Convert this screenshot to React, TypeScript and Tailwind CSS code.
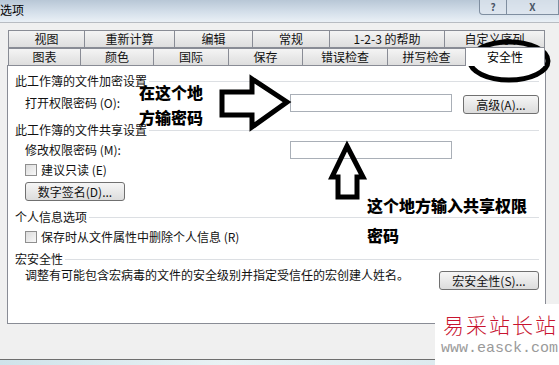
import React from "react";

const ui = { fontFamily: '"Noto Sans CJK SC", "Liberation Sans", sans-serif' };

const row1 = [
  { label: "视图", w: 77 },
  { label: "重新计算", w: 91 },
  { label: "编辑", w: 79 },
  { label: "常规", w: 78 },
  { label: "1-2-3 的帮助", w: 116 },
  { label: "自定义序列", w: 101 },
];

const row2 = [
  { label: "图表", w: 73 },
  { label: "颜色", w: 74 },
  { label: "国际", w: 76 },
  { label: "保存", w: 75 },
  { label: "错误检查", w: 86 },
  { label: "拼写检查", w: 79 },
  { label: "安全性", w: 80, active: true },
];

function Tab({ label, w, active }: { label: string; w: number; active?: boolean }) {
  return (
    <div
      style={{ width: w }}
      className={
        active
          ? "relative z-10 -ml-px flex h-[19px] items-center justify-center border border-b-0 border-[#898c95] bg-white text-[12px] text-black"
          : "-ml-px flex h-[18px] items-center justify-center border border-[#898c95] bg-gradient-to-b from-[#f4f4f4] to-[#dedede] text-[12px] text-[#111]"
      }
    >
      {label}
    </div>
  );
}

function GroupHeader({ children, className = "" }: { children: React.ReactNode; className?: string }) {
  return (
    <div className={"flex h-[16px] items-center gap-[2px] " + className}>
      <span className="text-[12px] leading-[16px] text-[#111]">{children}</span>
      <div className="h-px flex-1 bg-[#dcdfe3]" />
    </div>
  );
}

function Btn({ children, className = "" }: { children: React.ReactNode; className?: string }) {
  return (
    <div
      className={
        "flex h-[19px] items-center justify-center rounded-[3px] border border-[#707070] bg-gradient-to-b from-[#f6f6f6] to-[#dcdcdc] text-[12px] text-[#111] " +
        className
      }
    >
      {children}
    </div>
  );
}

function Check({ children, className = "" }: { children: React.ReactNode; className?: string }) {
  return (
    <div className={"flex h-[14px] items-center gap-[4px] pl-[10px] " + className}>
      <div className="h-[12px] w-[12px] border border-[#8f8f8f] bg-gradient-to-br from-[#dcdcdc] to-[#f8f8f8]" />
      <span className="text-[12px] leading-[14px] text-[#111]">{children}</span>
    </div>
  );
}

export default function App() {
  return (
    <div style={ui} className="relative h-[365px] w-[559px] overflow-hidden bg-[#f0f0f0]">
      {/* title bar */}
      <div className="flex h-[22px] items-start bg-[linear-gradient(to_bottom,#b8c7d6,#d4dfea_55%,#eaf0f6)]">
        <span className="pt-[3px] text-[12px] leading-[14px] text-black">选项</span>
        <div className="ml-auto flex h-[15px] rounded-bl-[4px] border border-t-0 border-[#7f8ea0] bg-[#dfe7ef]/70">
          <div className="flex w-[27px] items-center justify-center border-r border-[#7f8ea0] text-[10px] font-bold leading-[12px] text-[#4a5566]">
            ?
          </div>
          <div className="flex w-[51px] items-center justify-center text-[10px] font-bold leading-[12px] text-[#4a5566]">
            X
          </div>
        </div>
      </div>

      {/* dialog body */}
      <div className="flex h-[337px] flex-col border-t border-[#b8bcc2] pl-[7px]">
        <div className="flex flex-col pt-[7px]">
          <div className="ml-[2px] flex">
            {row1.map((t) => (
              <Tab key={t.label} label={t.label} w={t.w} />
            ))}
          </div>
          <div className="-mt-px ml-[2px] flex items-end">
            {row2.map((t) => (
              <Tab key={t.label} label={t.label} w={t.w} active={t.active} />
            ))}
          </div>
        </div>

        {/* panel */}
        <div className="-mt-px flex h-[259px] w-[539px] flex-col border border-[#898c95] bg-white pl-[7px] pr-[6px] pt-[7px]">
          <GroupHeader>此工作簿的文件加密设置</GroupHeader>
          <div className="mt-[5px] flex h-[19px] items-start">
            <span className="w-[275px] pl-[10px] text-[12px] leading-[18px] text-[#111]">打开权限密码 (O):</span>
            <div className="h-[18px] w-[162px] border border-[#a9afb7] bg-white" />
            <Btn className="ml-auto mt-[1px] w-[76px]">高级(A)...</Btn>
          </div>

          <GroupHeader className="mt-[9px]">此工作簿的文件共享设置</GroupHeader>
          <div className="mt-[3px] flex h-[18px] items-start">
            <span className="w-[275px] pl-[10px] text-[12px] leading-[18px] text-[#111]">修改权限密码 (M):</span>
            <div className="h-[18px] w-[162px] border border-[#a9afb7] bg-white" />
          </div>
          <Check className="mt-[4px]">建议只读 (E)</Check>
          <div className="mt-[5px] pl-[10px]">
            <Btn className="w-[100px]">数字签名(D)...</Btn>
          </div>

          <GroupHeader className="mt-[8px]">个人信息选项</GroupHeader>
          <Check className="mt-[5px]">保存时从文件属性中删除个人信息 (R)</Check>

          <GroupHeader className="mt-[7px]">宏安全性</GroupHeader>
          <div className="mt-[1px] flex items-start">
            <span className="pl-[10px] text-[12px] leading-[14px] text-[#111]">
              调整有可能包含宏病毒的文件的安全级别并指定受信任的宏创建人姓名。
            </span>
            <Btn className="ml-auto mt-[3px] w-[100px]">宏安全性(S)...</Btn>
          </div>
        </div>
      </div>
      <div className="h-[6px] border-t border-[#6e6e6e] bg-[linear-gradient(to_right,#cfe3ea,#e9f2f4_40%,#d6e6ec)]" />

      {/* hand-drawn annotations */}
      <svg className="pointer-events-none absolute left-0 top-0" width="559" height="365">
        <ellipse cx="509" cy="61" rx="39" ry="19" fill="none" stroke="#000" strokeWidth="5" />
        <polygon
          points="222,92 252,92 252,79 287,102 252,127 252,115 222,115"
          fill="none"
          stroke="#000"
          strokeWidth="5"
          strokeLinejoin="miter"
        />
        <polygon
          points="347,146 363,177 357,177 357,197 338,197 338,177 332,177"
          fill="none"
          stroke="#000"
          strokeWidth="5"
          strokeLinejoin="miter"
        />
      </svg>
      <div className="absolute left-[139px] top-[80px] text-[16px] font-black leading-[25px] text-black">
        在这个地
        <br />
        方输密码
      </div>
      <div className="absolute left-[367px] top-[190px] text-[16px] font-black leading-[30px] text-black">
        这个地方输入共享权限
        <br />
        密码
      </div>

      {/* watermark */}
      <div className="absolute left-[435px] top-[304px] flex h-[61px] w-[124px] flex-col items-end bg-white pr-[1px] pt-[8px]">
        <div className="text-[21px] font-light leading-[24px] tracking-[2px] text-[#c8142f]">易采站长站</div>
        <div className="mt-[6px] font-['Liberation_Mono',monospace] text-[15px] leading-[14px] text-[#9a9a9a]">
          www.easck.com
        </div>
      </div>
    </div>
  );
}
